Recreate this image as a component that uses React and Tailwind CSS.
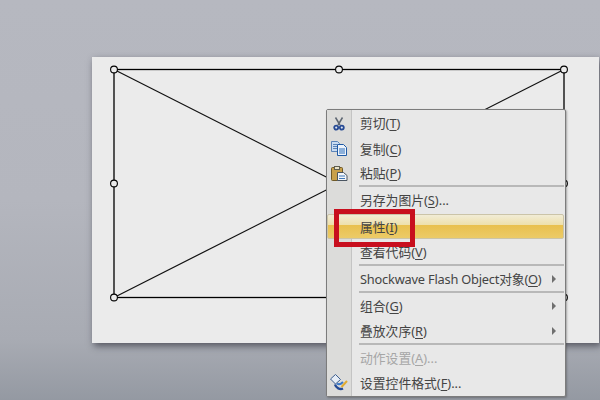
const font = { fontFamily: '"Noto Sans","Noto Sans CJK SC",sans-serif' };

function Handle({ x, y }) {
  return <circle cx={x} cy={y} r="3.4" fill="#ebebeb" stroke="#000" strokeWidth="1.1" />;
}

function Cut() {
  return (
    <svg width="12" height="14" viewBox="0 0 12 14">
      <path d="M2.5 0.5 L7 8 M9.5 0.5 L5 8" stroke="#5d6672" strokeWidth="1.5" fill="none" />
      <circle cx="3.2" cy="10.6" r="2" fill="#dfe6f0" stroke="#264a94" strokeWidth="1.8" />
      <circle cx="8.8" cy="10.6" r="2" fill="#dfe6f0" stroke="#264a94" strokeWidth="1.8" />
    </svg>
  );
}
function Copy() {
  return (
    <svg width="17" height="15" viewBox="0 0 17 15">
      <path d="M0.5 0.5h6l2 2v8h-8z" fill="#c9dcf2" stroke="#5b84b8" />
      <path d="M2 3.5h4M2 5.5h4M2 7.5h4" stroke="#5b84b8" />
      <path d="M6.5 3.5h6l3 3v8h-9z" fill="#eef4fb" stroke="#1f5aa5" />
      <path d="M8 8h6M8 10h6M8 12h6" stroke="#2b6cb8" />
    </svg>
  );
}
function Paste() {
  return (
    <svg width="17" height="15" viewBox="0 0 17 15">
      <rect x="0.5" y="1.5" width="11" height="13" rx="1" fill="#c8a04a" stroke="#6f5a28" />
      <rect x="3.5" y="0.5" width="5" height="3" fill="#e8e2c8" stroke="#5e5e50" />
      <path d="M6.5 6.5h6l3.5 3v5h-9.500z" fill="#f3f6fa" stroke="#4a5560" />
      <path d="M8 10h6M8 12.500h6" stroke="#3f78b8" />
    </svg>
  );
}
function Format() {
  return (
    <svg width="18" height="17" viewBox="0 0 18 17">
      <path d="M0.5 5 L5.500 0.5 L10.500 5.500 L5.500 10 Z" fill="#e6edf6" stroke="#3e5f8f" />
      <path d="M5 10.500 C6 14 10 16 13 14.500" fill="none" stroke="#234a96" strokeWidth="2.4" />
      <path d="M7 9.500 C9 11 11 10 13 8" fill="none" stroke="#3a78c8" strokeWidth="2" />
      <path d="M11.500 13 L17 7" stroke="#e0ab30" strokeWidth="2" />
    </svg>
  );
}

function Label({ before, hot, after = "", disabled, tight }) {
  return (
    <span className={`${disabled ? "text-[#a6a6a6]" : "text-[#444444]"} ${tight ? "tracking-[-0.2px]" : ""}`}>
      {before}(<span className="underline underline-offset-2">{hot}</span>){after}
    </span>
  );
}

function Row({ icon, arrow, h = "h-[25px]", active, first, children }) {
  return (
    <div className={`relative flex items-center ${h} pr-[8px]`}>
      {active && (
        <div className="absolute left-0 right-[1px] top-0 bottom-0 rounded-[2px] border border-[#cbc4a8] bg-[linear-gradient(#f1ecd6_0%,#eee0ac_42%,#e9c04e_45%,#eccb68_100%)]" />
      )}
      <div className="relative w-[24px] flex justify-center items-center shrink-0">{icon}</div>
      <div className={`relative pl-[9px] flex-1 ${first ? "" : "pt-[1px]"}`}>{children}</div>
      {arrow && (
        <div className="relative w-0 h-0 border-y-[4px] border-y-transparent border-l-[4px] border-l-[#6f6f6f] mr-[1px]" />
      )}
    </div>
  );
}

function Sep() {
  return <div className="h-[2px] ml-[32px] mr-[1px] bg-[#b8b8b8] shrink-0" />;
}

export default function App() {
  return (
    <div
      className="relative w-[600px] h-[400px] overflow-hidden bg-[linear-gradient(#b6b8c0_0%,#b4b6be_50%,#a8abb3_85%,#9499a2_100%)] pt-[57px] pl-[92px]"
      style={font}
    >
      <div className="relative w-[507px] h-[286px] bg-[#ebebeb] shadow-[2px_3px_7px_rgba(40,40,50,0.65)]">
        <svg className="absolute left-0 top-0" width="507" height="286">
          <rect x="22" y="12.500" width="450" height="228" fill="none" stroke="#000" strokeWidth="1.300" />
          <path d="M22 12.500 L472 240.500 M22 240.500 L472 12.500" stroke="#111" strokeWidth="1.200" />
          <Handle x={22} y={12.500} />
          <Handle x={247} y={12.500} />
          <Handle x={472} y={12.500} />
          <Handle x={22} y={126.500} />
          <Handle x={472} y={126.500} />
          <Handle x={22} y={240.500} />
          <Handle x={247} y={240.500} />
          <Handle x={472} y={240.500} />
        </svg>
      </div>

      <div className="absolute left-[326px] top-[109px] w-[240px] h-[288px] border border-[#7c7c7c] rounded-[2px] bg-[#e8e8e8] pt-[1px] text-[12.800px] leading-none shadow-[1px_1px_2px_rgba(60,60,60,0.4)]">
        <div className="absolute left-0 top-0 bottom-0 w-[25px] bg-[#dcdcda] border-r border-[#c4c4c4]" />
        <div className="relative flex flex-col">
          <Row first icon={<Cut />}><Label before="剪切" hot="T" /></Row>
          <Row icon={<Copy />}><Label before="复制" hot="C" /></Row>
          <Row icon={<Paste />} h="h-[24px]"><Label before="粘贴" hot="P" /></Row>
          <Sep />
          <Row><Label before="另存为图片" hot="S" after="..." /></Row>
          <div className="h-[2px]" />
          <Row active><Label before="属性" hot="I" /></Row>
          <Row><Label before="查看代码" hot="V" /></Row>
          <Sep />
          <Row arrow><Label tight before="Shockwave Flash Object对象" hot="O" /></Row>
          <Sep />
          <Row arrow><Label before="组合" hot="G" /></Row>
          <Row arrow><Label before="叠放次序" hot="R" /></Row>
          <Sep />
          <Row><Label before="动作设置" hot="A" after="..." disabled /></Row>
          <Row icon={<Format />}><Label before="设置控件格式" hot="F" after="..." /></Row>
        </div>
      </div>

      <div className="absolute left-[334px] top-[209px] w-[81px] h-[38px] border-[5px] border-[#c80f1e]" />
    </div>
  );
}
